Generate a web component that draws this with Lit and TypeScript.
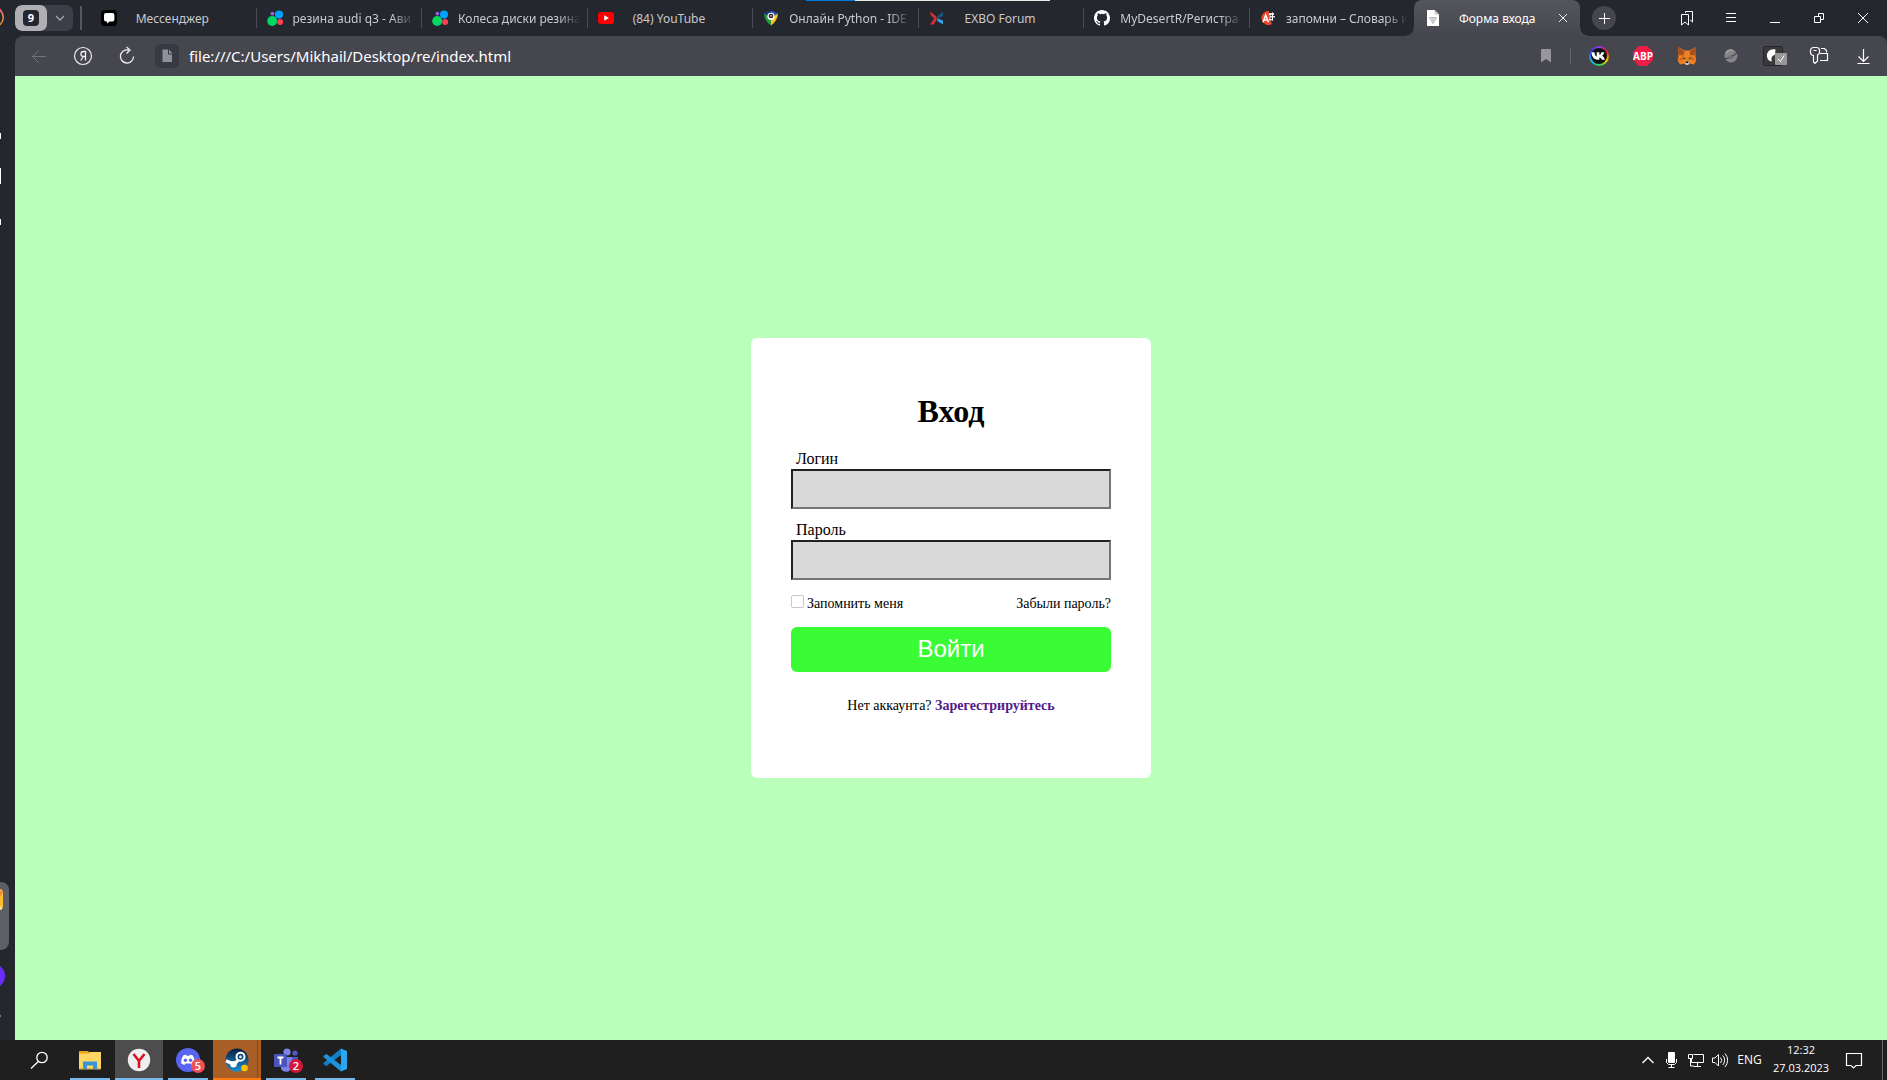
import { LitElement, html, svg, css, nothing, TemplateResult } from "lit";
import { customElement } from "lit/decorators.js";
import { classMap } from "lit/directives/class-map.js";

interface Tab {
  title: string;
  icon: TemplateResult;
  fit?: boolean;
  active?: boolean;
}

interface Action {
  label: string;
  icon: TemplateResult;
}

const icon = (size: number, body: TemplateResult, w = size) =>
  html`<svg width=${w} height=${size} viewBox="0 0 ${w} ${size}" aria-hidden="true">${body}</svg>`;

const avito = icon(16, svg`
  <circle cx="5.2" cy="11" r="5" fill="#00d95f"/>
  <circle cx="12" cy="4.6" r="4" fill="#00a2ff"/>
  <circle cx="13.2" cy="12" r="3" fill="#ff4053"/>
  <circle cx="5.4" cy="3.6" r="1.9" fill="#965eeb"/>`);

const tabs: Tab[] = [
  {
    title: "Мессенджер", fit: true,
    icon: icon(16, svg`<rect width="16" height="16" rx="4" fill="#000"/>
      <path d="M5 3h6.4A2 2 0 0 1 13.4 5v4.4a2 2 0 0 1-2 2H8.6L6 13.6v-2.2H5A2 2 0 0 1 3 9.400V5a2 2 0 0 1 2-2z" fill="#fff"/>`),
  },
  { title: "резина audi q3 - Ави", icon: avito },
  { title: "Колеса диски резина", icon: avito },
  {
    title: "(84) YouTube", fit: true,
    icon: icon(16, svg`<rect y="2" width="16" height="12" rx="3" fill="#f00"/><path d="M6.200 5.300v5.400L11 8z" fill="#fff"/>`),
  },
  {
    title: "Онлайн Python - IDE",
    icon: icon(16, svg`<path d="M8 .5 1 3.500 8 8z" fill="#1d3d94"/><path d="M8 .5l7 3L8 8z" fill="#2a55b5"/>
      <path d="M1 3.500Q1.500 11 8 15.500V8z" fill="#279b37"/><path d="M15 3.500Q14.500 11 8 15.500V8z" fill="#f7c325"/>
      <circle cx="8" cy="6.300" r="3.600" fill="#fff"/><circle cx="8" cy="6" r="2.300" fill="#222"/><path d="M7 5.200h2l-1 2z" fill="#fff"/>`),
  },
  {
    title: "EXBO Forum", fit: true,
    icon: icon(16, svg`<path d="M1 1.500l6.500 5.300v3L4.800 14.500H1l4.200-5.900L1.600 5z" fill="#d62e2e"/>
      <path d="M14 1.500 8.300 6.200v2.600L14 6z" fill="#16577f"/><path d="M8.300 8.200 14 10.500v4L8.300 11z" fill="#35a3e4"/>`),
  },
  {
    title: "MyDesertR/Регистра",
    icon: icon(16, svg`<path fill="#fff" d="M8 0C3.580 0 0 3.580 0 8c0 3.540 2.290 6.530 5.470 7.590.4.070.55-.17.55-.38 0-.19-.010-.82-.010-1.490-2.010.37-2.530-.49-2.690-.94-.09-.23-.48-.94-.82-1.130-.28-.15-.68-.52-.010-.53.63-.010 1.080.58 1.230.82.72 1.210 1.870.87 2.330.66.070-.52.28-.87.510-1.070-1.780-.2-3.640-.89-3.640-3.950 0-.87.310-1.590.82-2.150-.08-.2-.36-1.020.08-2.120 0 0 .67-.210 2.200.82a7.600 7.600 0 0 1 4 0c1.530-1.040 2.200-.82 2.200-.82.44 1.100.16 1.920.08 2.120.510.56.82 1.270.82 2.150 0 3.070-1.870 3.750-3.650 3.950.29.25.54.73.54 1.480 0 1.070-.010 1.930-.010 2.200 0 .210.15.46.55.38A8.010 8.010 0 0 0 16 8c0-4.420-3.580-8-8-8z"/>`),
  },
  {
    title: "запомни – Словарь и",
    icon: icon(16, svg`<path d="M9 1a7 7 0 1 0 3 13L9 8z" fill="#f2452d"/>
      <path d="M9 3h5v2H9zM10 6h5v1.500h-5zM9 9h4v1.500H9z" fill="#d8d8d8"/><path d="M10 3v7M12.500 2.500v8" stroke="#fff" fill="none"/>
      <path d="M3 12.200 5.700 5l2.800 7.200M4 10h3.500" stroke="#fff" stroke-width="1.500" fill="none"/>`),
  },
  {
    title: "Форма входа", fit: true, active: true,
    icon: icon(16, svg`<path d="M2 0h7.500L14 4.500V16H2z" fill="#fff"/><path d="M9.500 0v4.500H14" fill="#c9c9cc"/>
      <path d="M4.500 7.500h7L8 13.500zM8 8v5" fill="none" stroke="#b5b5b9"/><circle cx="8" cy="9.500" r="2" fill="#cfcfd2"/>`),
  },
];

const windowActions: Action[] = [
  { label: "Закладки", icon: icon(16, svg`<path d="M6.500 3V1.500h7V12l-2.300-2M2.500 4.500h7V15L6 12l-3.500 3z" fill="none" stroke="#fff" stroke-linejoin="round"/>`) },
  { label: "Меню", icon: icon(16, svg`<path d="M3 3.500h10M3 7.500h10M3 11.500h10" stroke="#fff" fill="none"/>`) },
  { label: "Свернуть", icon: icon(16, svg`<path d="M3 12.500h10" stroke="#fff" fill="none"/>`) },
  { label: "Восстановить", icon: icon(16, svg`<path d="M3.500 6.500h6v6h-6zM7.500 6V3.500h5v6H10" stroke="#fff" fill="none"/>`) },
  { label: "Закрыть", icon: icon(16, svg`<path d="M3 3l10 10M13 3 3 13" stroke="#fff" fill="none"/>`) },
];

const navActions: Action[] = [
  { label: "Назад", icon: icon(20, svg`<path d="M17 10.500H3.500M9.500 4.500l-6 6 6 6" stroke="#73737b" fill="none"/>`) },
  { label: "Яндекс", icon: icon(20, svg`<circle cx="10" cy="10" r="8.500" stroke="#eee" stroke-width="1.200" fill="none"/>
      <path d="M12.500 14.500v-9h-2c-1.600 0-2.600 1-2.600 2.500s1 2.500 2.600 2.500h2M10.300 10.500l-2.600 4" stroke="#eee" stroke-width="1.300" fill="none"/>`) },
  { label: "Обновить", icon: icon(20, svg`<path d="M11.500 4A6.600 6.600 0 1 0 16.600 10.500M9.500 1l3.500 3-3.500 3.500" stroke="#eee" stroke-width="1.300" fill="none"/>`) },
];

const extensions: Action[] = [
  { label: "VK", icon: html`<span class="vk">${icon(16, svg`<circle cx="8" cy="8" r="8" fill="#111"/>
      <path d="M.5 4.200h3C3.700 6.700 4.600 8.200 5.700 8.600V4.200h2.600v2.500c1-.2 1.800-1.300 2.200-2.500h2.800c-.4 1.700-1.400 2.900-2.300 3.500 1 .5 2.200 1.600 3 4.100h-3c-.5-1.300-1.400-2.200-2.700-2.400v2.400h-.6C3.300 11.800.6 9.200.5 4.200z" fill="#fff"/>`)}</span>` },
  { label: "Adblock Plus", icon: html`<span class="abp">ABP</span>` },
  { label: "MetaMask", icon: icon(20, svg`<path d="M1 1l6.500 3.500h5L19 1l-.6 9 .9 4.500-2.300 4-4.500-1-1.500 1.500H9L7.500 17.500l-4.500 1-2.300-4L1.600 10z" fill="#ee8120"/>
      <path d="M1 1l6.500 4.500-1 4L1.500 9zM19 1l-6.500 4.500 1 4 5-.5z" fill="#a65020"/><path d="M6.500 9.500 1 14.500l5.500-.5zM13.500 9.500l5.500 5-5.500-.5z" fill="#d9641c"/>
      <path d="M5.500 11.500l3 .5-.5 1.500zM14.500 11.500l-3 .5.500 1.500z" fill="#233447"/><path d="M7.500 16l1.500-1h2l1.500 1-1 2.500h-3z" fill="#eee"/><path d="M8.500 15.300h3v1.900h-3z" fill="#161616"/>`) },
  { label: "Блокировщик", icon: icon(20, svg`<circle cx="10" cy="10" r="6.500" fill="#868688"/><path d="M4 12.500C8 13 13.500 9.500 16 6.500" stroke="#48484e" stroke-width="1.200" fill="none"/><path d="M5 7a6 6 0 0 1 7-2.500" stroke="#a5a5a7" stroke-width="1.500" fill="none"/><circle cx="10" cy="11" r="1.300" fill="#a5a5a7" stroke="#55555a"/>`) },
  { label: "Переключатель", icon: icon(20, svg`<rect x=".5" y=".5" width="19" height="19" rx="2" fill="#39393b" stroke="#242426"/>
      <path d="M12.500 3.500C7 2.500 3.500 6 4 10.500c.3 3 2 4.500 5 5C8 13.500 8 10 12 8.500z" fill="#fff"/><rect x="12" y="7" width="12" height="12" rx="1" fill="#98989b"/><path d="M15 13l2.500 2.500 3.500-6" stroke="#fff" fill="none"/>`, 24) },
  { label: "Пароли", icon: icon(20, svg`<path d="M1.500 4.500a3 3 0 0 1 3-3h3a3 3 0 0 1 3 3v2a3 3 0 0 1-2 2.500v6L6 17.500 4.500 16V9.500a3 3 0 0 1-3-3zM4.500 4.500h3M12 2.500h3.500l2 2v2M11 7.500h7.500v7H11" fill="none" stroke="#fff" stroke-width="1.200"/>`) },
  { label: "Загрузки", icon: icon(20, svg`<path d="M10.500 3v12M5.500 10.500l5 5 5-5M4.500 17.500h12" fill="none" stroke="#fff" stroke-width="1.200"/>`) },
];

interface App extends Action {
  state?: "plain" | "current" | "alert";
  open?: boolean;
  badge?: string;
}

const apps: App[] = [
  { label: "Поиск", icon: icon(24, svg`<circle cx="15" cy="9.500" r="5.200" fill="none" stroke="#fff" stroke-width="1.300"/><path d="M11.300 13.500 4 20.500" stroke="#fff" stroke-width="1.300"/>`) },
  { label: "Проводник", open: true, icon: icon(24, svg`<path d="M1 3h9l2 2h11v16H1z" fill="#e9a520"/><path d="M1 5.500h9.500L12 4h11v16.500H1z" fill="#fdd766"/><path d="M1 20h22v1.500H1z" fill="#e2b74a"/><path d="M5 21v-7.500h14V21h-4v-3.500H9V21z" fill="#3a95d8"/>`) },
  { label: "Яндекс Браузер", open: true, state: "current", icon: icon(24, svg`<circle cx="12" cy="12" r="11.200" fill="#eee"/><path d="M6.500 6l5.500 7 5.500-7M12 12.500V20" fill="none" stroke="#d81420" stroke-width="2.600"/>`) },
  { label: "Discord", open: true, badge: "5", icon: icon(24, svg`<circle cx="12" cy="12" r="12" fill="#5865f2"/><path d="M7.500 7.300 10 6.800l.6 1h2.800l.6-1 2.500.5c1.600 2 2.500 5 2.300 8.200l-3.200 1.600-1-1.600H9.400l-1 1.600-3.200-1.600C5 12.300 6 9.300 7.500 7.300z" fill="#fff"/><circle cx="9.400" cy="12.200" r="1.700" fill="#5865f2"/><circle cx="14.600" cy="12.200" r="1.700" fill="#5865f2"/>`) },
  { label: "Steam", open: true, state: "alert", icon: icon(24, svg`<defs><linearGradient id="st" x2="0" y2="1"><stop stop-color="#0b1c3f"/><stop offset="1" stop-color="#1a8fc9"/></linearGradient></defs>
      <circle cx="12" cy="12" r="11.500" fill="url(#st)"/><circle cx="15.500" cy="8.800" r="4" fill="none" stroke="#fff" stroke-width="2"/><circle cx="15.500" cy="8.800" r="1.500" fill="#cde"/>
      <path d="M1 12.800l8 3.600 4-4" stroke="#fff" stroke-width="3.400" fill="none"/><circle cx="8.500" cy="16.200" r="3.200" fill="#fff"/><circle cx="19.500" cy="20" r="3.300" fill="#ffc400"/>`) },
  { label: "Teams", open: true, badge: "2", icon: icon(24, svg`<circle cx="13" cy="4" r="3.600" fill="#7b83eb"/><circle cx="21" cy="5" r="2.600" fill="#5059c9"/><path d="M17 9h7v7a5 5 0 0 1-5 4z" fill="#5059c9"/><path d="M7 9h11v8a6 6 0 0 1-11 4z" fill="#7b83eb"/><rect y="6" width="13" height="13" rx="1" fill="#4b53bc"/><path d="M3.500 9.500h6M6.500 9.500v7" stroke="#fff" stroke-width="1.800"/>`) },
  { label: "Visual Studio Code", open: true, icon: icon(24, svg`<path d="M18 .5 24 3v18l-6 2.500z" fill="#2aa7f0"/><path d="M18 .5v6.500L3.500 18 .5 16.200v-1.200z" fill="#1180c8"/><path d="M18 23.500V17L3.500 6 .5 7.800V9z" fill="#1b94dd"/>`) },
];

const tray: Action[] = [
  { label: "Показать скрытые значки", icon: icon(16, svg`<path d="M2.500 11 8 5.500l5.500 5.500" fill="none" stroke="#fff" stroke-width="1.300"/>`) },
  { label: "Микрофон", icon: icon(16, svg`<rect x="4" y="0" width="7" height="11" rx="1" fill="#fff"/><path d="M2.500 7v3.500l2 2h6l2-2V7M7.500 13v2M4.500 15.500h6" fill="none" stroke="#fff"/>`) },
  { label: "Сеть", icon: icon(16, svg`<path d="M5.500 2.500h10v8h-12V7M9.500 11v3M6 14.500h7M.5 2.500h4v4h-4zM2.500 6.500v7.500H6" fill="none" stroke="#fff"/>`) },
  { label: "Громкость", icon: icon(16, svg`<path d="M.5 6v4.500H3l3.500 3.500V2.500L3 6zM8.500 5.500a4 4 0 0 1 0 5.500M10.800 3.500a7 7 0 0 1 0 9.500M13 1.500a10 10 0 0 1 0 13.500" fill="none" stroke="#fff"/>`) },
];

@customElement("browser-tabs")
class BrowserTabs extends LitElement {
  static styles = css`
    :host { display: block; font-family: "Noto Sans", sans-serif; font-size: 12px; line-height: 16px; }
    button { border: 0; padding: 0; margin: 0; background: none; color: inherit; font: inherit; display: flex; align-items: center; justify-content: center; }
    svg { display: block; flex: none; }
    .bar { position: relative; display: flex; align-items: center; height: 36px; color: #c9c9cc; }
    .load { position: absolute; top: 0; left: calc(42% + 5px); width: 13%; height: 1px; background: linear-gradient(90deg, #0078d7 20%, #e6ece6 20%); }
    .group { display: flex; height: 26px; border-radius: 7px; background: #3d3e47; overflow: hidden; flex: none; }
    .count { width: 32px; background: #b0b0b4; border-radius: 7px; }
    .num { width: 16px; height: 16px; border-radius: 4px; background: #25272f; color: #fff; font-weight: 700; font-size: 11px; }
    .more { width: 26px; }
    .rule { width: 2px; height: 24px; margin: 0 8px 0 7px; background: #55565e; flex: none; }
    .tabs { display: grid; grid-auto-flow: column; grid-auto-columns: minmax(0, 1fr); flex: 1; min-width: 0; height: 36px; }
    .tab { position: relative; min-width: 0; display: flex; align-items: center; gap: 10px; padding: 0 4px 0 11px; box-sizing: border-box; }
    .tab::after { content: ""; position: absolute; right: -1px; top: 8px; width: 1px; height: 20px; background: #4b4c54; }
    .title { flex: 1; min-width: 0; padding-top: 2px; overflow: hidden; white-space: nowrap; justify-content: flex-start; -webkit-mask-image: linear-gradient(90deg, #000 80%, transparent 98%); }
    .fit .title { justify-content: center; padding-right: 34px; -webkit-mask-image: none; }
    .active { background: linear-gradient(#55555d, #46464f); border-radius: 8px 8px 0 0; color: #fff; padding-right: 11px; }
    .active .title { padding-right: 4px; }
    .active::before, .active::after { content: ""; position: absolute; top: auto; bottom: 0; width: 8px; height: 8px; }
    .active::before { left: -8px; background: radial-gradient(circle at 0 0, transparent 7px, #46464f 8px); }
    .active::after { right: -8px; background: radial-gradient(circle at 100% 0, transparent 7px, #46464f 8px); }
    .beforeactive::after { display: none; }
    .add { width: 24px; height: 24px; border-radius: 12px; background: #46464f; margin: 0 49px 0 12px; flex: none; }
    .action { width: 44px; height: 36px; flex: none; }
    .last { margin-right: 2px; }
  `;

  render() {
    return html`
      <nav class="bar" aria-label="Вкладки">
        <span class="load"></span>
        <div class="group">
          <button class="count"><span class="num">9</span></button>
          <button class="more" aria-label="Группы вкладок">${icon(12, svg`<path d="M2 4l4 4 4-4" fill="none" stroke="#a6a6ac" stroke-width="1.300"/>`)}</button>
        </div>
        <span class="rule"></span>
        <div class="tabs">
          ${tabs.map((t, i) => html`
            <div class=${classMap({ tab: true, fit: !!t.fit, active: !!t.active, beforeactive: !!tabs[i + 1]?.active })}>
              ${t.icon}
              <button class="title">${t.title}</button>
              ${t.active ? html`<button class="close" aria-label="Закрыть вкладку">${icon(12, svg`<path d="M2 2l8 8M10 2l-8 8" stroke="#eee"/>`)}</button>` : nothing}
            </div>`)}
        </div>
        <button class="add" aria-label="Новая вкладка">${icon(12, svg`<path d="M6.500 1v11M1 6.500h11" stroke="#fff"/>`)}</button>
        ${windowActions.map((a, i) => html`<button class=${classMap({ action: true, last: i === windowActions.length - 1 })} aria-label=${a.label}>${a.icon}</button>`)}
      </nav>`;
  }
}

@customElement("browser-toolbar")
class BrowserToolbar extends LitElement {
  static styles = css`
    :host { display: block; font-family: "Noto Sans", sans-serif; }
    button { border: 0; padding: 0; margin: 0; background: none; font: inherit; display: flex; align-items: center; justify-content: center; }
    svg { display: block; flex: none; }
    .bar { display: flex; align-items: center; height: 40px; padding-left: 2px; padding-right: 2px; background: #46464f; border-radius: 8px 8px 0 0; }
    .nav { width: 44px; height: 40px; }
    .page { width: 24px; height: 24px; margin: 0 10px 0 6px; border-radius: 5px; background: #383a43; }
    .url { flex: 1; min-width: 0; border: 0; padding: 0; background: none; outline: 0; color: #fff; font: 15px/20px "Noto Sans", sans-serif; }
    .mark { width: 24px; height: 24px; margin-right: 12px; }
    .rule { width: 1px; height: 16px; margin-right: 6px; background: #66666e; }
    .ext { width: 44px; height: 40px; }
    .vk { display: flex; padding: 2px; border-radius: 10px; background: conic-gradient(#8a3df0, #e02020, #ffd400, #22d45a, #18b8e8, #3939f0, #8a3df0); }
    .abp { width: 20px; height: 20px; background: #ed1e45; color: #fff; font: 700 10px/20px "Open Sans", sans-serif; clip-path: polygon(30% 0, 70% 0, 100% 30%, 100% 70%, 70% 100%, 30% 100%, 0 70%, 0 30%); display: flex; justify-content: center; }
  `;

  render() {
    return html`
      <div class="bar">
        ${navActions.map((a) => html`<button class="nav" aria-label=${a.label}>${a.icon}</button>`)}
        <button class="page" aria-label="О странице">${icon(16, svg`<path d="M3.500 1.500H9v5h4V14H3.500z" fill="#8f9098"/><path d="M10 1.500v4h3.500z" fill="#8f9098"/>`)}</button>
        <input class="url" aria-label="Адрес" .value=${"file:///C:/Users/Mikhail/Desktop/re/index.html"} />
        <button class="mark" aria-label="В закладки">${icon(16, svg`<path d="M4 1h8a1 1 0 0 1 1 1v12.500l-5-3.500-5 3.500V2a1 1 0 0 1 1-1z" fill="#96969c"/>`)}</button>
        <span class="rule"></span>
        ${extensions.map((a) => html`<button class="ext" aria-label=${a.label}>${a.icon}</button>`)}
      </div>`;
  }
}

@customElement("browser-rail")
class BrowserRail extends LitElement {
  static styles = css`
    :host { display: block; }
    svg { display: block; flex: none; }
    .rail { display: flex; flex-direction: column; height: 100%; overflow: hidden; }
    .gap { flex: 1; }
  `;

  render() {
    return html`
      <div class="rail">
        ${icon(230, svg`
          <circle cx="-6" cy="17.500" r="9.300" fill="none" stroke="#f0913a" stroke-width="1.500"/>
          <path d="M-1 8.500a9.300 9.300 0 0 1 3.500 5" fill="none" stroke="#d85a8c" stroke-width="1.500"/>
          <path d="M0 133h1v6H0zM0 168h1v16H0zM0 219h1v6H0z" fill="#fff"/>`, 15)}
        <span class="gap"></span>
        ${icon(160, svg`
          <rect x="-20" y="2" width="29" height="68" rx="8" fill="#5d5e66"/>
          <rect x="-17" y="9" width="20" height="21" rx="4" fill="#ffbe2e"/>
          <circle cx="0" cy="13" r="2.500" fill="#f08a4a"/><circle cx="0" cy="28" r="2" fill="#ffe2a0"/>
          <circle cx="-7" cy="96" r="12" fill="#6e2cff"/>
          <path d="M0 135h1v2H0z" fill="#7d7e86"/>`, 15)}
      </div>`;
  }
}

@customElement("login-form")
class LoginForm extends LitElement {
  static styles = css`
    :host { display: block; width: 400px; font-family: "Liberation Serif", serif; color: #000; }
    .card { display: flex; flex-direction: column; padding: 55px 40px 63px; background: #fff; border-radius: 6px; }
    .heading { margin: 0 0 19px; font-size: 32px; line-height: 37px; font-weight: 700; text-align: center; }
    .label { padding-left: 5px; font-size: 16px; line-height: 20px; }
    .field { box-sizing: border-box; width: 100%; height: 40px; margin: 0 0 11px; padding: 0 8px; border: 2px solid; border-color: #212121 #767676 #767676 #212121; border-radius: 0; background: #d9d9d9; font: 16px/20px "Liberation Serif", serif; }
    .row { display: flex; align-items: center; justify-content: space-between; margin: 3px 0 14px; font-size: 14px; line-height: 19px; }
    .remember { display: flex; align-items: center; gap: 3px; }
    .box { appearance: none; box-sizing: border-box; width: 13px; height: 13px; margin: 0 0 4px; border: 1px solid #c8c8c8; border-radius: 2px; background: #fff; }
    .forgot { color: #000; text-decoration: none; }
    .submit { height: 45px; border: 0; border-radius: 6px; background: #3afc35; color: #fff; font: 24px/28px "Liberation Sans", sans-serif; padding-bottom: 3px; }
    .register { margin: 25px 0 0; font-size: 14px; line-height: 18px; text-align: center; }
    .link { color: #551a8b; font-weight: 700; text-decoration: none; }
  `;

  render() {
    return html`
      <form class="card" @submit=${(e: Event) => e.preventDefault()}>
        <h1 class="heading">Вход</h1>
        <label class="label" for="login">Логин</label>
        <input class="field" id="login" type="text" />
        <label class="label" for="password">Пароль</label>
        <input class="field" id="password" type="password" />
        <div class="row">
          <label class="remember"><input class="box" type="checkbox" />Запомнить меня</label>
          <a class="forgot" href="#">Забыли пароль?</a>
        </div>
        <button class="submit">Войти</button>
        <p class="register">Нет аккаунта? <a class="link" href="#">Зарегестрируйтесь</a></p>
      </form>`;
  }
}

@customElement("task-bar")
class TaskBar extends LitElement {
  static styles = css`
    :host { display: block; font-family: "Open Sans", sans-serif; font-size: 12px; line-height: 18px; color: #fff; }
    button { border: 0; padding: 0; margin: 0; background: none; color: inherit; font: inherit; display: flex; align-items: center; justify-content: center; }
    svg { display: block; flex: none; }
    .bar { display: flex; align-items: center; height: 40px; padding-left: 15px; background: #1f1f1f; }
    .apps { display: flex; gap: 1px; flex: 1; }
    .app { position: relative; width: 48px; height: 40px; }
    .app:first-child { margin-right: 2px; }
    .open::after { content: ""; position: absolute; left: 4px; right: 4px; bottom: 0; height: 2px; background: #76b9ed; }
    .current { background: #4d4d4d; }
    .alert { background: linear-gradient(90deg, #a95e25 44px, #82481c 44px, #82481c 45px, #a95e25 45px); }
    .current::after, .alert::after { left: 0; right: 0; }
    .alert::after { background: #ff7b0a; }
    .badge { position: absolute; right: 7px; bottom: 7px; width: 14px; height: 14px; border-radius: 7px; background: #f04f55; font: 600 11px/14px "Open Sans", sans-serif; text-align: center; }
    .teams .badge { background: #d31638; }
    .tray { width: 24px; height: 40px; }
    .lang { width: 35px; height: 40px; }
    .clock { width: 68px; height: 40px; flex-direction: column; padding-bottom: 2px; font-size: 11px; }
    .notes { width: 38px; height: 40px; }
    .edge { width: 5px; height: 40px; margin-left: 9px; border-left: 1px solid #6a6a6a; box-sizing: border-box; }
  `;

  render() {
    return html`
      <footer class="bar">
        <div class="apps">
          ${apps.map((a) => html`
            <button class=${classMap({ app: true, open: !!a.open, current: a.state === "current", alert: a.state === "alert", teams: a.label === "Teams" })} aria-label=${a.label}>
              ${a.icon}${a.badge ? html`<span class="badge">${a.badge}</span>` : nothing}
            </button>`)}
        </div>
        ${tray.map((a) => html`<button class="tray" aria-label=${a.label}>${a.icon}</button>`)}
        <button class="lang">ENG</button>
        <button class="clock"><span>12:32</span><span>27.03.2023</span></button>
        <button class="notes" aria-label="Уведомления">${icon(18, svg`<path d="M1.500 2.500h15v12H11l-2.500 2.500L6 14.500H1.500z" fill="none" stroke="#fff" stroke-width="1.200"/>`)}</button>
        <span class="edge"></span>
      </footer>`;
  }
}

@customElement("app-root")
class AppRoot extends LitElement {
  static styles = css`
    :host { display: block; }
    .screen { display: flex; flex-direction: column; min-height: 100vh; background: #25272f; }
    .browser { display: flex; flex: 1; }
    .rail { width: 15px; flex: none; }
    .window { display: flex; flex-direction: column; flex: 1; min-width: 0; }
    .page { display: flex; flex: 1; align-items: center; justify-content: center; background: #baffba; }
  `;

  render() {
    return html`
      <div class="screen">
        <div class="browser">
          <browser-rail class="rail"></browser-rail>
          <div class="window">
            <browser-tabs></browser-tabs>
            <browser-toolbar></browser-toolbar>
            <main class="page"><login-form></login-form></main>
          </div>
        </div>
        <task-bar></task-bar>
      </div>`;
  }
}
